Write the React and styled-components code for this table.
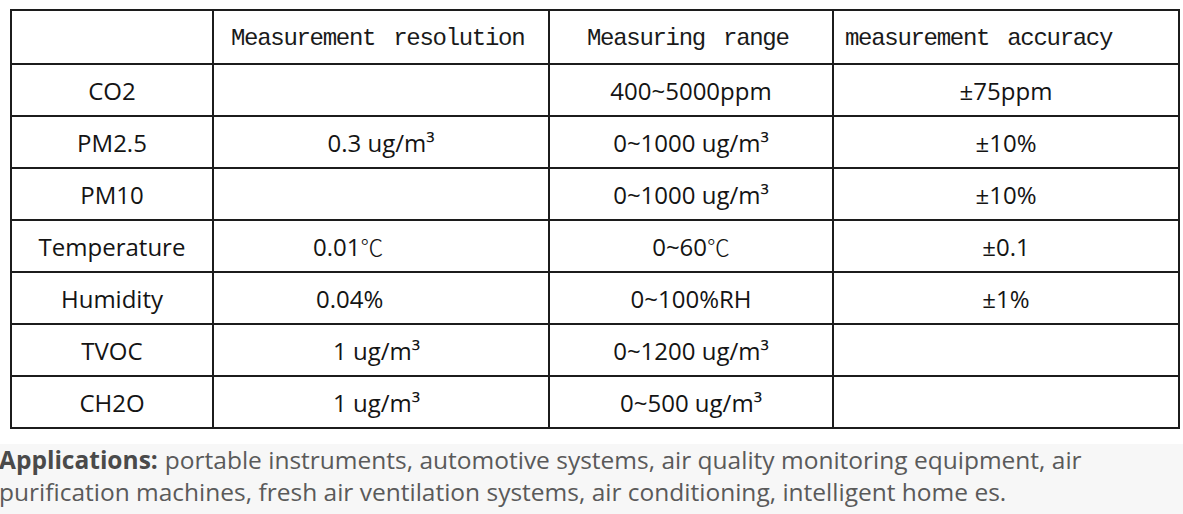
import React from 'react';
import styled, { createGlobalStyle } from 'styled-components';

const GlobalStyle = createGlobalStyle`
  html, body {
    margin: 0;
    padding: 0;
    background: #ffffff;
  }
  body {
    width: 1183px;
    height: 514px;
    overflow: hidden;
  }
`;

const Page = styled.div`
  width: 1183px;
  height: 514px;
  display: flex;
  flex-direction: column;
  background: #ffffff;
`;

const TableWrap = styled.div`
  padding: 9px 0 0 10px;
  background: #ffffff;
`;

const Table = styled.table`
  border-collapse: collapse;
  table-layout: fixed;
  width: 1168px;
  border: 2px solid #1c1c1c;
`;

const Cell = styled.td`
  height: 50px;
  padding: 0;
  border: 2px solid #1c1c1c;
  text-align: ${p => (p.$align === 'left' ? 'left' : 'center')};
  padding-left: ${p => p.$indent || 0}px;
  font-family: "Open Sans", "Noto Sans", sans-serif;
  font-size: 24px;
  color: #141414;
  vertical-align: middle;
  white-space: nowrap;
`;

const HeadCell = styled(Cell)`
  font-family: "Liberation Mono", "DejaVu Sans Mono", monospace;
  font-size: 24px;
  letter-spacing: -1.3px;
  word-spacing: 5px;
  color: #1a1a1a;
  text-align: left;
  padding-left: ${p => p.$indent || 0}px;
  padding-top: 2px;
`;

const Celsius = styled.span`
  font-family: "Noto Sans CJK SC", sans-serif;
  font-weight: 300;
  font-size: 0.95em;
`;

const Footer = styled.div`
  margin-top: 15px;
  background: #f7f7f7;
  flex: 1;
  display: flex;
  flex-direction: column;
  padding-left: 0;
`;

const FooterLine = styled.div`
  margin-left: -1px;
  font-family: "Open Sans", "Noto Sans", sans-serif;
  font-size: 24.5px;
  line-height: 32px;
  color: #5a5a5a;
  white-space: nowrap;
`;

const Strong = styled.b`
  font-weight: 700;
  color: #4a4a4a;
  margin-right: 7px;
`;

const rows = [
  { name: 'CO2', res: '', range: '400~5000ppm', acc: '±75ppm' },
  { name: 'PM2.5', res: '0.3 ug/m³', range: '0~1000 ug/m³', acc: '±10%' },
  { name: 'PM10', res: '', range: '0~1000 ug/m³', acc: '±10%' },
  {
    name: 'Temperature',
    res: <>0.01<Celsius>℃</Celsius></>,
    resIndent: 99,
    range: <>0~60<Celsius>℃</Celsius></>,
    acc: '±0.1',
  },
  { name: 'Humidity', res: '0.04%', resIndent: 102, range: '0~100%RH', acc: '±1%' },
  { name: 'TVOC', res: '1 ug/m³', resIndent: 119, range: '0~1200 ug/m³', acc: '' },
  { name: 'CH2O', res: '1 ug/m³', resIndent: 119, range: '0~500 ug/m³', acc: '' },
];

export default function App() {
  return (
    <Page>
      <GlobalStyle />
      <TableWrap>
        <Table>
          <colgroup>
            <col style={{ width: 202 }} />
            <col style={{ width: 336 }} />
            <col style={{ width: 284 }} />
            <col style={{ width: 346 }} />
          </colgroup>
          <tbody>
            <tr>
              <Cell />
              <HeadCell $indent={17}>Measurement resolution</HeadCell>
              <HeadCell $indent={37}>Measuring range</HeadCell>
              <HeadCell $indent={11}>measurement accuracy</HeadCell>
            </tr>
            {rows.map(r => (
              <tr key={r.name}>
                <Cell>{r.name}</Cell>
                <Cell
                  $align={r.resIndent ? 'left' : 'center'}
                  $indent={r.resIndent}
                >
                  {r.res}
                </Cell>
                <Cell>{r.range}</Cell>
                <Cell>{r.acc}</Cell>
              </tr>
            ))}
          </tbody>
        </Table>
      </TableWrap>
      <Footer>
        <FooterLine>
          <Strong>Applications:</Strong>
          <span>portable instruments, automotive systems, air quality monitoring equipment, air</span>
        </FooterLine>
        <FooterLine>
          purification machines, fresh air ventilation systems, air conditioning, intelligent home es.
        </FooterLine>
      </Footer>
    </Page>
  );
}
